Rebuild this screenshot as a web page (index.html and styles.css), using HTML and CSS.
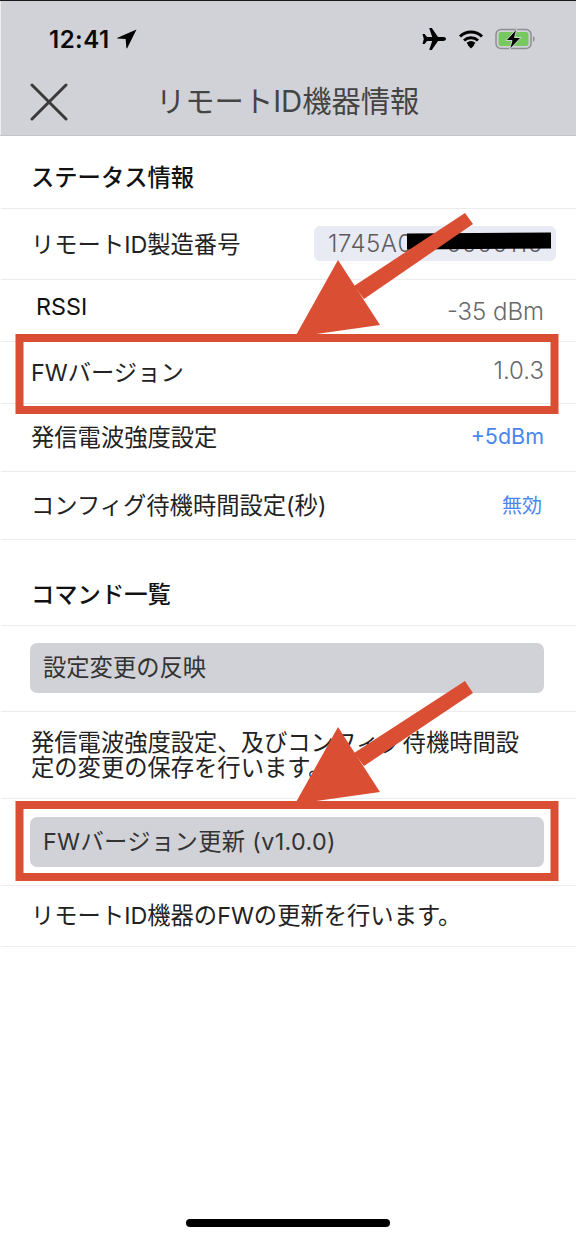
FILE: index.html
```html
<!DOCTYPE html>
<html lang="ja">
<head>
<meta charset="utf-8">
<title>リモートID機器情報</title>
<link rel="stylesheet" href="styles.css">
</head>
<body>
<div class="screen">
  <header class="top">
    <div class="status">
      <div class="time"><span>12:41</span>
        <svg class="loc" viewBox="0 0 20 20" width="20" height="20"><path d="M19.500.5.500 8.800c-.4.2-.3.7.100.8l8 .4.800 9c0 .5.700.6.900.100z" fill="#000"/></svg>
      </div>
      <div class="sys">
        <svg width="26" height="24" viewBox="0 0 26 24"><path d="M25 12c0-1.300-1.500-1.900-3-1.900h-5L10.800 1H8.200l3 9.100H6L3.600 7H1.500l1.300 5-1.300 5h2.100L6 13.900h5.200l-3 9.100h2.600L17 13.900h5c1.500 0 3-.6 3-1.900z" fill="#000"/></svg>
        <svg width="26" height="20" viewBox="0 0 26 20"><path d="M2 7.500a16 16 0 0 1 22 0M6 11.500a10.500 10.500 0 0 1 14 0M9.500 15a5.500 5.500 0 0 1 7 0" fill="none" stroke="#000" stroke-width="3"/><path d="M13 19.500 9.800 16.200a4.500 4.500 0 0 1 6.400 0z" fill="#000"/></svg>
        <svg width="40" height="22" viewBox="0 0 40 22"><rect x="1" y="1.500" width="35" height="19" rx="5" fill="none" stroke="#8e8e90" stroke-width="1.500"/><rect x="3.500" y="4" width="30" height="14" rx="2.500" fill="#76c85f"/><path d="M38 8v6c1-.5 1.600-1.600 1.600-3S39 8.500 38 8z" fill="#8e8e90"/><path d="M22 .5 11 12.500h6L14.500 21.500 26 9.500h-6.500z" fill="#000" stroke="#d1d2d7" stroke-width="1"/></svg>
      </div>
    </div>
    <div class="nav">
      <svg class="close" width="38" height="38" viewBox="0 0 38 38"><path d="M2 2l34 34M36 2 2 36" stroke="#3a3a3a" stroke-width="3" fill="none" stroke-linecap="round"/></svg>
      <h1>リモートID機器情報</h1>
    </div>
  </header>

  <main>
    <h2 class="sect first">ステータス情報</h2>
    <div class="row r70"><span>リモートID製造番号</span><span class="serial"><span>1745A0</span><span>0000110</span><i class="redact"></i></span></div>
    <div class="row r62 rssi"><span class="rssi-l">RSSI</span><span class="val">-35 dBm</span></div>
    <div class="row r62"><span>FWバージョン</span><span class="val">1.0.3</span></div>
    <div class="row r68"><span>発信電波強度設定</span><span class="link">+5dBm</span></div>
    <div class="row r68"><span>コンフィグ待機時間設定(秒)</span><span class="link small">無効</span></div>
    <h2 class="sect second">コマンド一覧</h2>
    <div class="row r86 btnrow"><div class="btn">設定変更の反映</div></div>
    <div class="row r87 desc"><p>発信電波強度設定、及びコンフィグ待機時間設定の変更の保存を行います。</p></div>
    <div class="row r87 btnrow"><div class="btn wide">FWバージョン更新 (v1.0.0)</div></div>
    <div class="row r61"><span>リモートID機器のFWの更新を行います。</span></div>
  </main>

  <svg class="marks" width="576" height="1236" viewBox="0 0 576 1236">
    <g fill="#da4f33">
      <path d="M465 213 473 224 364 299 354 286z"/>
      <path d="M338 260 380 325 295 337z"/>
      <path d="M465 681 473 693 364 766 354 753z"/>
      <path d="M338 727 380 792 295 804z"/>
    </g>
    <g fill="none" stroke="#da4f33" stroke-width="8">
      <rect x="19.500" y="338" width="535" height="72"/>
      <rect x="19.500" y="805" width="535" height="72"/>
    </g>
  </svg>
  <div class="home"></div>
</div>
</body>
</html>
```
FILE: styles.css
```css
* { box-sizing: border-box; }
html, body { margin: 0; padding: 0; }
body {
  width: 576px;
  height: 1236px;
  overflow: hidden;
  background: #fff;
  font-family: "Inter", "Noto Sans CJK JP", sans-serif;
  color: #222;
}
.screen { position: relative; width: 576px; height: 1236px; overflow: hidden; }
.top {
  height: 136px;
  background: #d1d2d7;
  border-top: 1px solid #1a1a1a;
  border-bottom: 1px solid #c4c4c8;
  box-shadow: inset 1px 0 0 #eeeeef;
}
.status {
  display: flex;
  justify-content: space-between;
  align-items: center;
  height: 40px;
  margin-top: 18px;
  padding: 0 41px 0 49px;
}
.time { display: flex; align-items: center; gap: 7px; font-size: 24px; font-weight: 600; letter-spacing: .5px; color: #0a0a0a; }
.sys { display: flex; align-items: center; gap: 11px; }
.nav { display: flex; align-items: center; height: 60px; padding-left: 29.500px; margin-top: 8px; }
.close { flex: none; margin-top: 9px; }
h1 {
  margin: 3px 0 0 88.500px;
  font-size: 29.300px;
  font-weight: 400;
  color: #444;
  white-space: nowrap;
}
.row {
  display: flex;
  justify-content: space-between;
  align-items: center;
  margin-left: 1px;
  padding: 0 33px 4px 30px;
  border-bottom: 1px solid #ececee;
  font-size: 23.300px;
  font-weight: 400;
  white-space: nowrap;
}
.r70 { height: 71px; padding-right: 20px; padding-bottom: 2px; }
.r62 { height: 62px; }
.r61 { height: 61px; }
.r68 { height: 68px; }
.r86 { height: 86px; }
.r87 { height: 87px; }
.sect { margin: 0 0 0 1px; padding: 0 30px; display: flex; align-items: center; font-size: 23.300px; font-weight: 500; color: #111; border-bottom: 1px solid #ececee; }
.first { height: 73px; padding-top: 8px; }
.second { height: 86px; padding-top: 20px; }
.serial {
  position: relative;
  display: flex;
  justify-content: space-between;
  width: 242px;
  height: 35px;
  line-height: 35px;
  background: #e8eaf4;
  border-radius: 6px;
  padding: 0 13px 0 14px;
  color: #5c5c60;
  font-weight: 300;
  font-size: 24px;
  letter-spacing: .5px;
}
.redact { position: absolute; left: 93px; top: 7px; width: 144px; height: 16px; background: #000; transform: rotate(-.3deg); }
.val { color: #68686c; font-size: 24px; font-weight: 300; margin-right: -1px; }
.link { color: #4a86ee; font-size: 21.500px; margin-top: 1px; margin-right: -1px; }
.small { font-size: 20px; margin-right: 1px; }
.rssi-l { margin-left: 5px; margin-top: -4px; color: #111; }
.rssi .val { margin-top: 6px; }
.btnrow { padding: 0 31px 0 29px; }
.btnrow.r86 { padding-bottom: 1px; }
.btn {
  width: 514px;
  height: 50px;
  line-height: 50px;
  background: #d1d2d7;
  border-radius: 7px;
  padding-left: 13px;
  color: #333;
}
.wide { letter-spacing: .35px; }
.desc { padding-bottom: 0; }
.desc p { margin: 0; width: 500px; white-space: normal; line-height: 25px; color: #222; }
.marks { position: absolute; left: 0; top: 0; pointer-events: none; }
.home { position: absolute; left: 186px; top: 1219px; width: 204px; height: 8px; border-radius: 4px; background: #000; }
```
